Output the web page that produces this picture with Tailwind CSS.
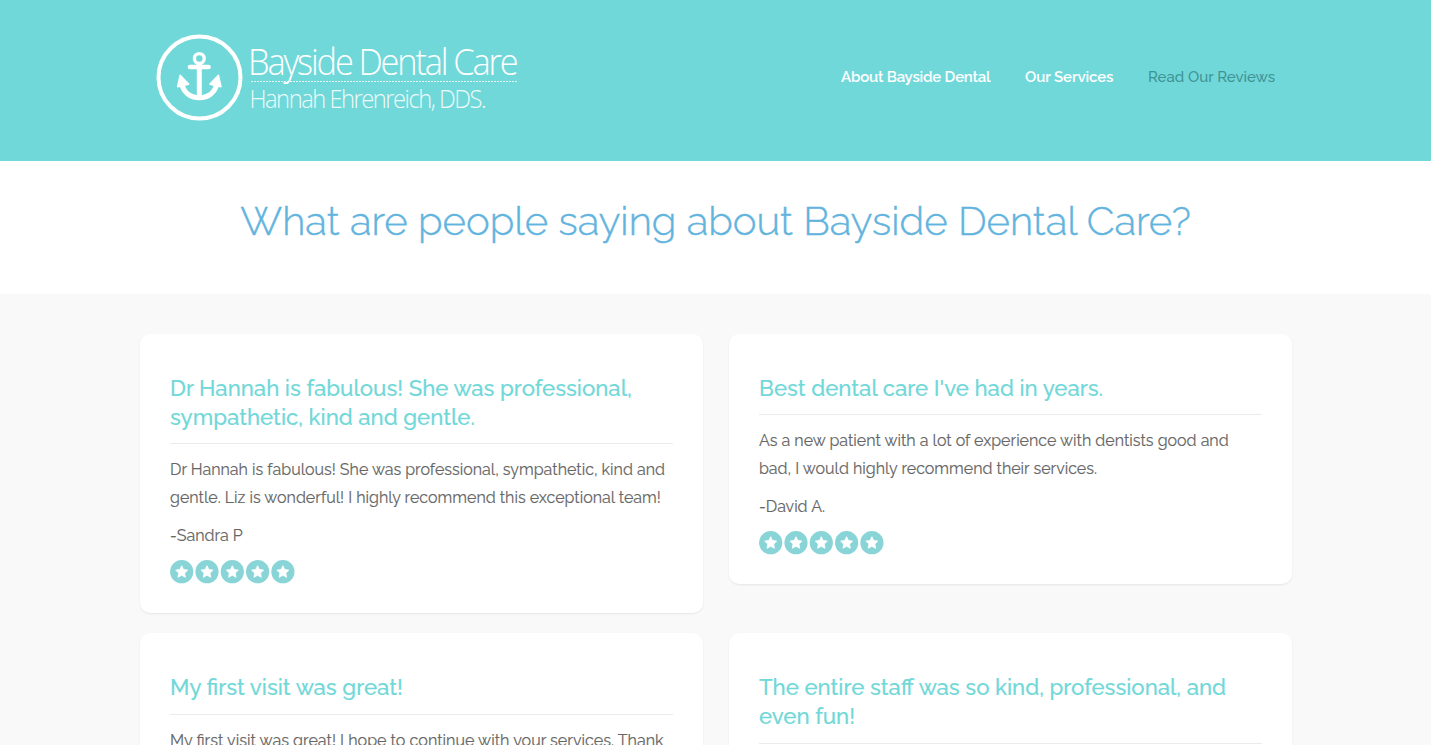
<!DOCTYPE html>
<html lang="en">

<head>
    <meta charset="UTF-8">
    <meta name="viewport" content="width=device-width, initial-scale=1.0">
    <title>Bayside Dental Care - Reviews</title>
    <script src="https://cdn.jsdelivr.net/npm/@tailwindcss/browser@4"></script>
</head>

<body class="bg-[#f9f9f9] font-['Raleway','Lato',sans-serif] text-[#666] h-screen overflow-hidden">

    <svg class="hidden">
        <symbol id="stars" viewBox="0 0 125 24">
            <defs>
                <g id="star">
                    <circle cx="11.7" cy="11.7" r="11.6" fill="#88d4d6" />
                    <path d="M11.7 5.7l1.8 3.8 4.2.6-3 3 .7 4.2-3.7-2-3.7 2 .7-4.2-3-3 4.2-.6z" fill="#fff" stroke="#fff" stroke-width=".8" stroke-linejoin="round" />
                </g>
            </defs>
            <use href="#star" />
            <use href="#star" x="25.3" />
            <use href="#star" x="50.6" />
            <use href="#star" x="75.9" />
            <use href="#star" x="101.2" />
        </symbol>
    </svg>

    <header class="bg-[#71d8d9] h-[161px]">
        <div class="w-[1152px] ml-[140px] flex justify-between pl-4 pr-[17px]">
            <svg class="mt-[34px]" width="364" height="88" viewBox="156 34 364 88" fill="none" stroke="#fff">
                <circle cx="199.5" cy="77.5" r="41" stroke-width="4" />
                <!-- anchor -->
                <circle cx="199.3" cy="58.5" r="4.9" stroke-width="3.4" />
                <path d="M199.3 63v35" stroke-width="5" />
                <path d="M190 67h18.6" stroke-width="4.6" stroke-linecap="round" />
                <path d="M181.5 83c2 9.5 9 14.7 17.8 14.7s15.8-5.2 17.8-14.7" stroke-width="5.2" />
                <path d="M180.3 75.5l-2.5 11 10.7-2.5zM218.3 75.5l2.5 11-10.7-2.5z" fill="#fff" stroke-width="1.8" stroke-linejoin="round" />
                <path d="M251 81.5h267" stroke-width="1" stroke-dasharray="2 1" stroke-opacity=".8" />
                <g fill="#fff" stroke="none" class="font-['Open_Sans',sans-serif] font-light">
                    <text transform="translate(248 75) scale(.93 1)" font-size="37" textLength="291" lengthAdjust="spacing">Bayside Dental Care</text>
                    <text transform="translate(249.5 108) scale(.93 1)" font-size="25.5" textLength="255" lengthAdjust="spacing" fill-opacity=".9">Hannah Ehrenreich, DDS.</text>
                </g>
            </svg>
            <nav class="flex gap-[34px] mt-[65px] text-[15px] leading-6 font-semibold text-white whitespace-nowrap">
                <a class="w-[150px] tracking-[-0.2px]">About Bayside Dental</a>
                <a class="w-[89px] tracking-[-0.1px]">Our Services</a>
                <a class="w-[127px] font-medium text-[#3f9496]">Read Our Reviews</a>
            </nav>
        </div>
    </header>

    <section class="bg-white h-[133px] pt-[30px] text-center">
        <h1 class="text-[40.15px] leading-[60px] font-light text-[#62b4de] whitespace-nowrap [-webkit-text-stroke:0.4px]">What are people saying about Bayside Dental Care?</h1>
    </section>

    <main class="w-[1152px] ml-[140px] mt-10 grid grid-cols-2 gap-x-[26px] gap-y-5 items-start whitespace-nowrap [-webkit-text-stroke:0.15px]">
        <article class="bg-white rounded-[10px] shadow-[0_1px_2px_rgba(0,0,0,0.08)] px-[30px] pt-10 pb-[29px]">
            <h2 class="text-[22.2px] leading-[29px] font-medium text-[#71d8d9] pb-[11px] border-b border-[#ebebeb]">Dr Hannah is fabulous! She was professional,<br>sympathetic, kind and gentle.</h2>
            <p class="mt-3 text-base leading-7">Dr Hannah is fabulous! She was professional, sympathetic, kind and<br>gentle. Liz is wonderful! I highly recommend this exceptional team!</p>
            <p class="mt-[10px] text-base leading-7">-Sandra P</p>
            <svg class="mt-[10px]" width="125" height="24"><use href="#stars" /></svg>
        </article>

        <article class="bg-white rounded-[10px] shadow-[0_1px_2px_rgba(0,0,0,0.08)] px-[30px] pt-10 pb-[29px]">
            <h2 class="text-[22.2px] leading-[29px] font-medium text-[#71d8d9] pb-[11px] border-b border-[#ebebeb]">Best dental care I've had in years.</h2>
            <p class="mt-3 text-base leading-7">As a new patient with a lot of experience with dentists good and<br>bad, I would highly recommend their services.</p>
            <p class="mt-[10px] text-base leading-7">-David A.</p>
            <svg class="mt-[10px]" width="125" height="24"><use href="#stars" /></svg>
        </article>

        <article class="bg-white rounded-[10px] shadow-[0_1px_2px_rgba(0,0,0,0.08)] px-[30px] pt-10 pb-[29px]">
            <h2 class="text-[22.2px] leading-[29px] font-medium text-[#71d8d9] pb-3 border-b border-[#ebebeb]">My first visit was great!</h2>
            <p class="mt-3 text-[16.1px] leading-7">My first visit was great! I hope to continue with your services. Thank<br>you!</p>
        </article>

        <article class="bg-white rounded-[10px] shadow-[0_1px_2px_rgba(0,0,0,0.08)] px-[30px] pt-10 pb-[29px]">
            <h2 class="text-[22.2px] leading-[29px] font-medium text-[#71d8d9] pb-3 border-b border-[#ebebeb]">The entire staff was so kind, professional, and<br>even fun!</h2>
            <p class="mt-3 text-base leading-7">The entire staff was so kind, professional, and even fun!</p>
        </article>
    </main>

</body>

</html>
